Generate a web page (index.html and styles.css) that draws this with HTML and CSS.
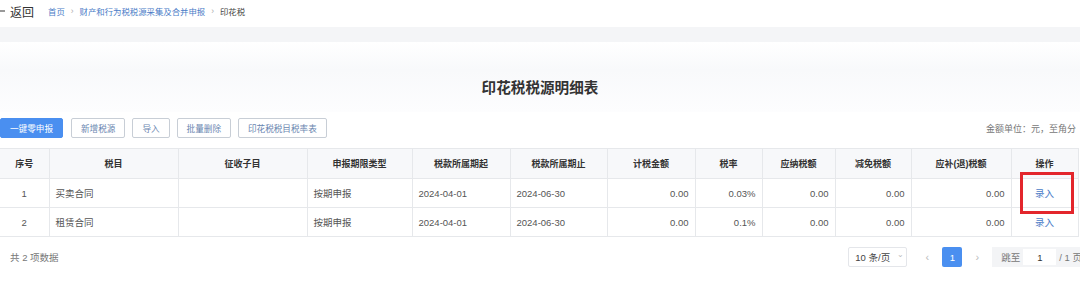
FILE: index.html
```html
<!DOCTYPE html>
<html lang="zh-CN">
<head>
  <meta charset="UTF-8">
  <title>印花税税源明细表</title>
  <link rel="stylesheet" href="styles.css">
</head>
<body>

<div class="topbar">
  <a class="back-link" href="#">
    <svg class="back-arrow" width="5" height="10" viewBox="0 0 5 10"><line x1="0" y1="5" x2="5" y2="5" stroke="#555" stroke-width="1.2"/></svg>
    <span>返回</span>
  </a>
  <div class="breadcrumb">
    <a href="#">首页</a>
    <span class="sep">›</span>
    <a href="#">财产和行为税税源采集及合并申报</a>
    <span class="sep">›</span>
    <span class="current">印花税</span>
  </div>
</div>

<div class="band"></div>

<div class="title-area">
  <h1>印花税税源明细表</h1>
</div>

<div class="toolbar">
  <div class="btn-group">
    <button class="btn btn-primary">一键零申报</button>
    <button class="btn">新增税源</button>
    <button class="btn">导入</button>
    <button class="btn">批量删除</button>
    <button class="btn">印花税税目税率表</button>
  </div>
  <div class="unit-note">金额单位：元，至角分</div>
</div>

<table class="data-table">
  <colgroup>
    <col style="width:49px">
    <col style="width:129px">
    <col style="width:129px">
    <col style="width:105px">
    <col style="width:98px">
    <col style="width:97px">
    <col style="width:88px">
    <col style="width:67px">
    <col style="width:73px">
    <col style="width:76px">
    <col style="width:100px">
    <col style="width:67px">
  </colgroup>
  <thead>
    <tr>
      <th>序号</th>
      <th>税目</th>
      <th>征收子目</th>
      <th>申报期限类型</th>
      <th>税款所属期起</th>
      <th>税款所属期止</th>
      <th>计税金额</th>
      <th>税率</th>
      <th>应纳税额</th>
      <th>减免税额</th>
      <th>应补(退)税额</th>
      <th>操作</th>
    </tr>
  </thead>
  <tbody>
    <tr>
      <td class="center">1</td>
      <td>买卖合同</td>
      <td></td>
      <td>按期申报</td>
      <td>2024-04-01</td>
      <td>2024-06-30</td>
      <td class="num">0.00</td>
      <td class="num">0.03%</td>
      <td class="num">0.00</td>
      <td class="num">0.00</td>
      <td class="num">0.00</td>
      <td class="center op-cell"><a href="#" class="op-link">录入</a><span class="highlight-box"></span></td>
    </tr>
    <tr>
      <td class="center">2</td>
      <td>租赁合同</td>
      <td></td>
      <td>按期申报</td>
      <td>2024-04-01</td>
      <td>2024-06-30</td>
      <td class="num">0.00</td>
      <td class="num">0.1%</td>
      <td class="num">0.00</td>
      <td class="num">0.00</td>
      <td class="num">0.00</td>
      <td class="center"><a href="#" class="op-link">录入</a></td>
    </tr>
  </tbody>
</table>

<div class="footer">
  <div class="total">共 2 项数据</div>
  <div class="pager">
    <div class="page-size">10 条/页 <span class="caret">⌄</span></div>
    <span class="page-arrow prev">‹</span>
    <span class="page-num active">1</span>
    <span class="page-arrow">›</span>
    <div class="jump">
      <span>跳至</span>
      <span class="jump-input">1</span>
      <span>/ 1 页</span>
    </div>
  </div>
</div>

</body>
</html>
```

FILE: styles.css
```css
html, body {
  margin: 0;
  padding: 0;
  background-color: #fff;
  font-family: "Liberation Sans", "Noto Sans CJK SC", sans-serif;
  color: #333;
  width: 1080px;
  height: 292px;
  overflow: hidden;
}

/* 顶部返回 + 面包屑 */
.topbar {
  height: 27px;
  display: flex;
  align-items: center;
  padding-bottom: 5px;
  box-sizing: border-box;
}

.back-link {
  display: flex;
  align-items: center;
  gap: 5px;
  color: #333;
  text-decoration: none;
  font-size: 12px;
}

.breadcrumb {
  margin-left: 14px;
  font-size: 8.4px;
  display: flex;
  align-items: center;
  gap: 6px;
}

.breadcrumb a {
  color: #4a7cc7;
  text-decoration: none;
}

.breadcrumb .sep {
  color: #aaa;
}

.breadcrumb .current {
  color: #444;
}

.band {
  height: 15px;
  background-color: #f4f5f7;
}

.title-area {
  height: 70px;
  display: flex;
  align-items: center;
  justify-content: center;
  background: linear-gradient(180deg, #fff 0%, #f8f9fb 40%, #fdfdfe 100%);
}

.title-area h1 {
  margin: 18px 0 0 0;
  font-size: 14.6px;
  font-weight: bold;
  color: #333;
}

/* 按钮栏 */
.toolbar {
  display: flex;
  justify-content: space-between;
  align-items: center;
  margin-top: 6px;
  height: 20px;
  padding-right: 4px;
}

.btn-group {
  display: flex;
  gap: 7px;
}

.btn {
  height: 20px;
  padding: 0 9px;
  font-size: 8.6px;
  font-family: inherit;
  white-space: nowrap;
  border: 1px solid #c8ced6;
  border-radius: 2px;
  background: #fff;
  color: #6a86b0;
  cursor: pointer;
}

.btn-primary {
  background: #4a8ff0;
  border-color: #4a8ff0;
  color: #fff;
  width: 63px;
  padding: 0;
  margin-right: 1px;
}

.unit-note {
  font-size: 9px;
  color: #777;
}

/* 表格 */
.data-table {
  margin-top: 10px;
  border-collapse: collapse;
  table-layout: fixed;
  width: 1078px;
  font-size: 9.5px;
  color: #555;
}

.data-table th,
.data-table td {
  border: 1px solid #e6e8eb;
  padding: 0 6px;
  white-space: nowrap;
}

.data-table th {
  height: 29px;
  background: #f7f8fa;
  font-weight: bold;
  color: #333;
  text-align: center;
  font-size: 9px;
}

.data-table td {
  height: 28px;
}

.data-table tr > :first-child {
  border-left: none;
}

.data-table td.center {
  text-align: center;
}

.data-table td.num {
  text-align: right;
}

.op-cell {
  position: relative;
}

.op-link {
  color: #4a7cc7;
  text-decoration: none;
}

.highlight-box {
  position: absolute;
  left: 8px;
  top: -7px;
  width: 54px;
  height: 42px;
  border: 3px solid #e3262c;
  box-sizing: border-box;
}

/* 底部分页 */
.footer {
  display: flex;
  justify-content: space-between;
  align-items: center;
  margin-top: 10px;
  height: 20px;
}

.total {
  margin-left: 10px;
  font-size: 9.5px;
  color: #777;
}

.pager {
  display: flex;
  align-items: center;
  font-size: 9.5px;
  color: #555;
  margin-right: -4px;
}

.page-size {
  width: 59px;
  height: 20px;
  box-sizing: border-box;
  border: 1px solid #e4e6ea;
  border-radius: 2px;
  display: flex;
  align-items: center;
  padding-left: 6px;
  gap: 7px;
  color: #444;
}

.caret {
  color: #bbb;
  font-size: 8px;
  line-height: 1;
  margin-top: -4px;
}

.page-arrow {
  color: #bbb;
  width: 30px;
  text-align: center;
  font-size: 11px;
}

.page-arrow.prev {
  margin-left: 5px;
}

.page-num {
  width: 20px;
  height: 20px;
  display: flex;
  align-items: center;
  justify-content: center;
}

.page-num.active {
  background: #4a8ff0;
  color: #fff;
  border-radius: 2px;
}

.jump {
  height: 20px;
  background: #f3f4f6;
  display: flex;
  align-items: center;
  gap: 3px;
  padding-left: 9px;
  padding-right: 2px;
  color: #777;
}

.jump-input {
  width: 33px;
  height: 16px;
  background: #fff;
  display: flex;
  align-items: center;
  justify-content: center;
  color: #333;
}
```
